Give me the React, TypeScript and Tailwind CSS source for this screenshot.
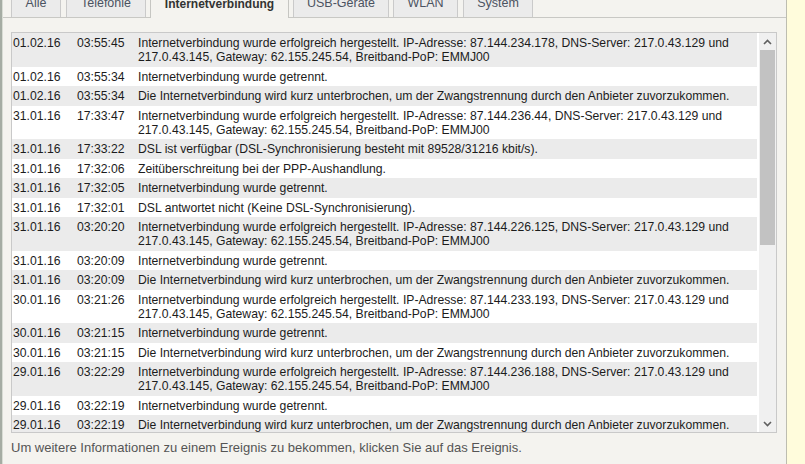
import React from "react";

type LogEntry = {
  date: string;
  time: string;
  text: string;
};

const connected = (ip: string) =>
  `Internetverbindung wurde erfolgreich hergestellt. IP-Adresse: ${ip}, DNS-Server: 217.0.43.129 und 217.0.43.145, Gateway: 62.155.245.54, Breitband-PoP: EMMJ00`;
const disconnected = "Internetverbindung wurde getrennt.";
const forcedReset =
  "Die Internetverbindung wird kurz unterbrochen, um der Zwangstrennung durch den Anbieter zuvorzukommen.";

const entries: LogEntry[] = [
  { date: "01.02.16", time: "03:55:45", text: connected("87.144.234.178") },
  { date: "01.02.16", time: "03:55:34", text: disconnected },
  { date: "01.02.16", time: "03:55:34", text: forcedReset },
  { date: "31.01.16", time: "17:33:47", text: connected("87.144.236.44") },
  {
    date: "31.01.16",
    time: "17:33:22",
    text: "DSL ist verfügbar (DSL-Synchronisierung besteht mit 89528/31216 kbit/s).",
  },
  { date: "31.01.16", time: "17:32:06", text: "Zeitüberschreitung bei der PPP-Aushandlung." },
  { date: "31.01.16", time: "17:32:05", text: disconnected },
  { date: "31.01.16", time: "17:32:01", text: "DSL antwortet nicht (Keine DSL-Synchronisierung)." },
  { date: "31.01.16", time: "03:20:20", text: connected("87.144.226.125") },
  { date: "31.01.16", time: "03:20:09", text: disconnected },
  { date: "31.01.16", time: "03:20:09", text: forcedReset },
  { date: "30.01.16", time: "03:21:26", text: connected("87.144.233.193") },
  { date: "30.01.16", time: "03:21:15", text: disconnected },
  { date: "30.01.16", time: "03:21:15", text: forcedReset },
  { date: "29.01.16", time: "03:22:29", text: connected("87.144.236.188") },
  { date: "29.01.16", time: "03:22:19", text: disconnected },
  { date: "29.01.16", time: "03:22:19", text: forcedReset },
];

// widths / left gaps measured off the screenshot
const tabs = [
  { label: "Alle", w: "w-[50px]", ml: "ml-[8px]" },
  { label: "Telefonie", w: "w-[80px]", ml: "ml-[5px]" },
  { label: "Internetverbindung", w: "w-[139px]", ml: "ml-[4px]", active: true },
  { label: "USB-Geräte", w: "w-[96px]", ml: "ml-[4px]" },
  { label: "WLAN", w: "w-[65px]", ml: "ml-[4px]" },
  { label: "System", w: "w-[70px]", ml: "ml-[5px]" },
];

const Tab = ({ label, w, ml, active }: { label: string; w: string; ml: string; active?: boolean }) => {
  if (active) {
    return (
      <div
        className={`${w} ${ml} relative -mb-px h-[28px] flex items-end justify-center pb-[5px] border border-b-0 border-[#c6c6c2] bg-[#f4f3ef] font-bold text-[#333333] text-[12px]`}
      >
        {label}
      </div>
    );
  }
  return (
    <div
      className={`${w} ${ml} h-[27px] flex items-end justify-center pb-[4px] border border-b-0 border-[#cacaca] bg-[#ebebeb] text-[#4b5361] text-[12.5px]`}
    >
      {label}
    </div>
  );
};

const Chevron = ({ up }: { up?: boolean }) => (
  <svg width="9" height="6" viewBox="0 0 9 6">
    <polyline
      points={up ? "1,5 4.5,1.5 8,5" : "1,1 4.5,4.5 8,1"}
      fill="none"
      stroke="#5f5f5f"
      strokeWidth="1.6"
    />
  </svg>
);

const Scrollbar = () => (
  <div className="w-[17px] flex flex-col bg-[#f0f0f0]">
    <div className="h-[17px] flex items-center justify-center">
      <Chevron up />
    </div>
    <div className="flex-1 flex flex-col px-px">
      <div className="h-[195px] bg-[#c2c2c2]" />
    </div>
    <div className="h-[17px] flex items-center justify-center">
      <Chevron />
    </div>
  </div>
);

const LogRow = ({ entry, odd }: { entry: LogEntry; odd: boolean }) => (
  <div className={`flex pt-[3px] pb-[2.5px] leading-[14px] ${odd ? "bg-white" : "bg-[#ebebeb]"}`}>
    <div className="w-[64px] pl-px shrink-0">{entry.date}</div>
    <div className="w-[61px] pl-px shrink-0">{entry.time}</div>
    <div className="flex-1 pl-px pr-[4px]">{entry.text}</div>
  </div>
);

export default function App() {
  return (
    <div className="w-[805px] h-[464px] flex overflow-hidden font-['Liberation_Sans',Arial,sans-serif] text-[12.2px] text-[#1c1c1c]">
      <div className="w-[3px] border-l-2 border-[#a5aca3] bg-[#d8dcd4]" />

      <div className="w-[784px] flex flex-col bg-[#f4f3ef] border-r border-[#bdbdb0]">
        <div className="-mt-[10px] flex border-b border-[#c8c8c4]">
          {tabs.map((t) => (
            <Tab key={t.label} {...t} />
          ))}
        </div>

        <div className="mt-[14px] ml-[8px] w-[766px] h-[401px] flex border border-[#c9c9c9] bg-white">
          <div className="flex-1 overflow-hidden pr-[2px]">
            {entries.map((e, i) => (
              <LogRow key={i} entry={e} odd={i % 2 === 1} />
            ))}
          </div>
          <Scrollbar />
        </div>

        <div className="mt-[7px] ml-[8px] leading-[15px] text-[13px] text-[#555555]">
          Um weitere Informationen zu einem Ereignis zu bekommen, klicken Sie auf das Ereignis.
        </div>
      </div>

      <div className="flex-1 bg-[#fffcdc]" />
    </div>
  );
}
